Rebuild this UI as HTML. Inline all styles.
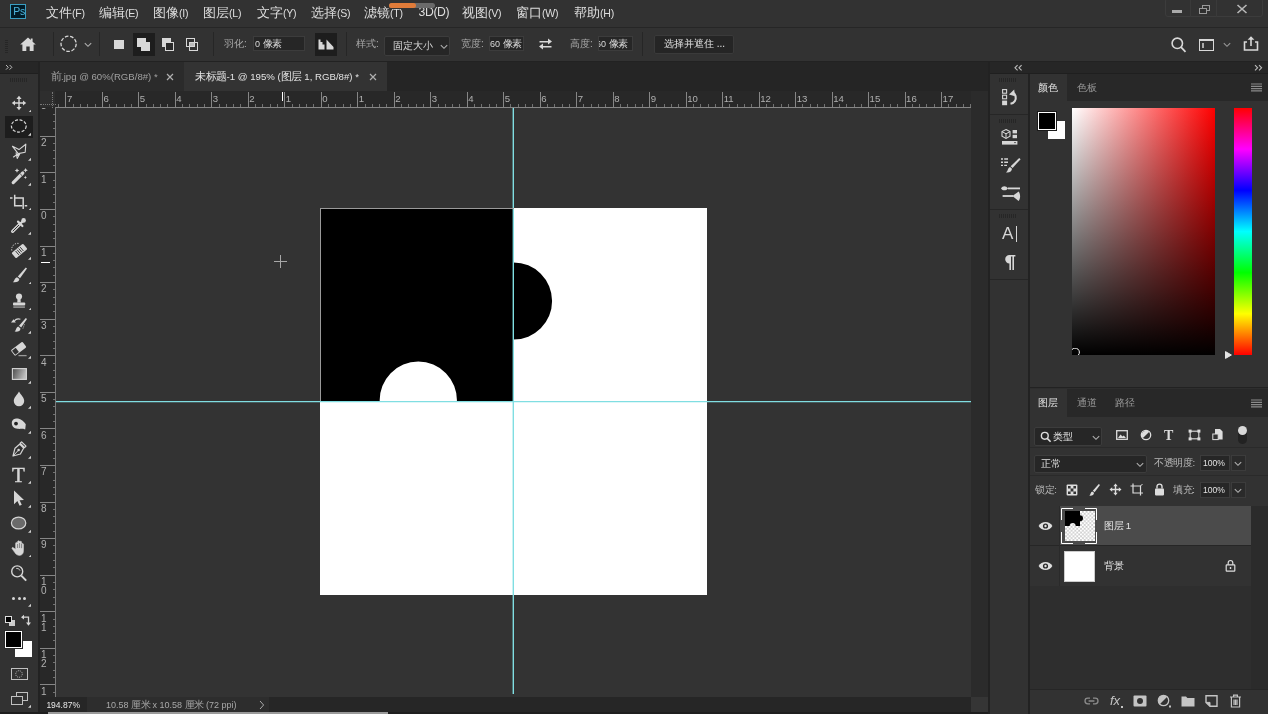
<!DOCTYPE html><html><head><meta charset="utf-8"><title>Photoshop</title><style>
*{margin:0;padding:0;box-sizing:border-box}
html{background:#323232}
html,body{width:1268px;height:714px;overflow:hidden;font-family:"Liberation Sans",sans-serif;color:#d6d6d6}
div,span,svg{position:absolute}
i{font-style:normal}
b{display:inline-block;width:1em;text-align:center;font-weight:normal}
.t{white-space:nowrap;line-height:1;filter:grayscale(1)}
#menubar{left:0;top:0;width:1268px;height:27px;background:#323232}
#optbar{left:0;top:28px;width:1268px;height:33px;background:#323232}
.m{top:6px;font-size:13px;color:#dedede}
.o{font-size:10.5px;color:#bdbdbd}
.sep{width:1px;background:#262626}
.inp{background:#262626;border:1px solid #3c3c3c}
</style></head><body>
<div id="menubar">
<div style="left:10px;top:4px;width:16px;height:15px;background:#001c28;border:1px solid #3a9ec2"></div><span class="t" style="left:13.300px;top:6px;font-size:10.500px;color:#4db4dd;letter-spacing:-0.300px;filter:brightness(1.001)">Ps</span>
<span class="t" style="left:46px;top:6.3px;font-size:13px;color:#dedede;"><b>文</b><b>件</b><i style="font-size:10.6px;letter-spacing:-0.25px">(F)</i></span>
<span class="t" style="left:99px;top:6.3px;font-size:13px;color:#dedede;"><b>编</b><b>辑</b><i style="font-size:10.6px;letter-spacing:-0.25px">(E)</i></span>
<span class="t" style="left:153px;top:6.3px;font-size:13px;color:#dedede;"><b>图</b><b>像</b><i style="font-size:10.6px;letter-spacing:-0.25px">(I)</i></span>
<span class="t" style="left:203px;top:6.3px;font-size:13px;color:#dedede;"><b>图</b><b>层</b><i style="font-size:10.6px;letter-spacing:-0.25px">(L)</i></span>
<span class="t" style="left:257px;top:6.3px;font-size:13px;color:#dedede;"><b>文</b><b>字</b><i style="font-size:10.6px;letter-spacing:-0.25px">(Y)</i></span>
<span class="t" style="left:311px;top:6.3px;font-size:13px;color:#dedede;"><b>选</b><b>择</b><i style="font-size:10.6px;letter-spacing:-0.25px">(S)</i></span>
<span class="t" style="left:364px;top:6.3px;font-size:13px;color:#dedede;"><b>滤</b><b>镜</b><i style="font-size:10.6px;letter-spacing:-0.25px">(T)</i></span>
<span class="t" style="left:418.5px;top:6px;font-size:12.2px;color:#dedede;letter-spacing:-0.350px">3D(D)</span>
<span class="t" style="left:462px;top:6.3px;font-size:13px;color:#dedede;"><b>视</b><b>图</b><i style="font-size:10.6px;letter-spacing:-0.25px">(V)</i></span>
<span class="t" style="left:516px;top:6.3px;font-size:13px;color:#dedede;"><b>窗</b><b>口</b><i style="font-size:10.6px;letter-spacing:-0.25px">(W)</i></span>
<span class="t" style="left:574px;top:6.3px;font-size:13px;color:#dedede;"><b>帮</b><b>助</b><i style="font-size:10.6px;letter-spacing:-0.25px">(H)</i></span>
</div>
<div style="left:0;top:27px;width:1268px;height:1px;background:#262626"></div>
<div id="optbar"></div>
<div style="left:5px;top:40px;width:3px;height:14px;background:repeating-linear-gradient(180deg,#262626 0 1px,#323232 1px 2px)"></div>
<svg style="left:19px;top:36px" width="18" height="16" viewBox="0 0 18 16"><path d="M9 1.5L1.2 8.6H3.4V15H7.3V10.6H10.7V15H14.6V8.6H16.8L13.6 5.7V2.6H11.8V4Z" fill="#d8d8d8"/></svg>
<div class="sep" style="left:53px;top:32px;height:24px"></div>
<svg style="left:59px;top:34px" width="20" height="20" viewBox="0 0 20 20"><circle cx="9.6" cy="9.8" r="7.6" fill="none" stroke="#d8d8d8" stroke-width="1.3" stroke-dasharray="3.6 1.7"/></svg>
<svg style="left:84px;top:42px" width="8" height="6" viewBox="0 0 8 6"><path d="M0.8 1.2L4 4.3L7.2 1.2" fill="none" stroke="#b0b0b0" stroke-width="1.1"/></svg>
<div class="sep" style="left:99px;top:32px;height:24px"></div>
<div style="left:114px;top:40px;width:10px;height:9px;background:#d8d8d8"></div>
<div style="left:133px;top:33px;width:22px;height:23px;background:#1d1d1d"></div>
<div style="left:137px;top:38px;width:9px;height:9px;background:#d8d8d8"></div><div style="left:141px;top:42px;width:9px;height:9px;background:#d8d8d8"></div>
<div style="left:162px;top:38px;width:9px;height:9px;background:#d8d8d8"></div><div style="left:165px;top:42px;width:9px;height:9px;background:#2a2a2a;border:1.3px solid #d8d8d8"></div>
<div style="left:186px;top:38px;width:9px;height:9px;border:1.3px solid #d8d8d8"></div><div style="left:189px;top:42px;width:9px;height:9px;border:1.3px solid #d8d8d8"></div><div style="left:190px;top:43px;width:4px;height:3px;background:#bbb"></div>
<div class="sep" style="left:213px;top:32px;height:24px"></div>
<span class="t" style="left:224px;top:39px;font-size:10px;color:#a8a8a8;"><b>羽</b><b>化</b>:</span>
<div class="inp" style="left:253px;top:36px;width:52px;height:15px"></div><span class="t" style="left:255px;top:39px;font-size:9.5px;color:#d8d8d8"><i style="font-size:9px">0&nbsp;</i><b>像</b><b>素</b></span>
<div style="left:315px;top:33px;width:22px;height:23px;background:#1d1d1d"></div>
<svg style="left:317px;top:38px" width="18" height="13" viewBox="0 0 18 13"><path d="M1.5 1.5H3.5V4H5.5V6.5H7.5V11.5H1.5Z M9.5 1.5L16.5 9V11.5H9.5Z" fill="#d8d8d8"/></svg>
<div class="sep" style="left:346px;top:32px;height:24px"></div>
<span class="t" style="left:356px;top:39px;font-size:10px;color:#a8a8a8;"><b>样</b><b>式</b>:</span>
<div class="inp" style="left:384px;top:36px;width:66px;height:20px;border-radius:2px"></div><span class="t" style="left:393px;top:41px;font-size:10px;color:#d8d8d8"><b>固</b><b>定</b><b>大</b><b>小</b></span>
<svg style="left:440px;top:44px" width="8" height="6" viewBox="0 0 8 6"><path d="M0.8 1.2L4 4.3L7.2 1.2" fill="none" stroke="#b0b0b0" stroke-width="1.1"/></svg>
<span class="t" style="left:461px;top:39px;font-size:10px;color:#a8a8a8;"><b>宽</b><b>度</b>:</span>
<div class="inp" style="left:489px;top:36px;width:35px;height:15px"></div><span class="t" style="left:490px;top:39px;font-size:9.5px;color:#d8d8d8"><i style="font-size:9px">60&nbsp;</i><b>像</b><b>素</b></span>
<svg style="left:538px;top:37px" width="15" height="14" viewBox="0 0 15 14"><path d="M1.5 4.6H10V2L14 5.2L10 8.2V6H1.5Z M13.5 9.6H5V7.2L1 10.2L5 13.2V11H13.5Z" fill="#d8d8d8" transform="translate(0,-0.6)"/></svg>
<span class="t" style="left:570px;top:39px;font-size:10px;color:#a8a8a8;"><b>高</b><b>度</b>:</span>
<div class="inp" style="left:598px;top:36px;width:35px;height:15px;overflow:hidden"><span class="t" style="left:-3px;top:2px;font-size:9.5px;color:#d8d8d8"><i style="font-size:9px">60&nbsp;</i><b>像</b><b>素</b></span></div>
<div class="sep" style="left:642px;top:32px;height:24px"></div>
<div style="left:654px;top:35px;width:80px;height:19px;background:#252525;border:1px solid #3a3a3a;border-radius:2px"></div><span class="t" style="left:664px;top:39px;font-size:10px;color:#e0e0e0"><b>选</b><b>择</b><b>并</b><b>遮</b><b>住</b> ...</span>
<svg style="left:1170px;top:36px" width="18" height="18" viewBox="0 0 18 18"><circle cx="7.3" cy="7.3" r="5.2" fill="none" stroke="#d8d8d8" stroke-width="1.6"/><path d="M11 11.2L15.5 15.8" stroke="#d8d8d8" stroke-width="1.8"/></svg>
<div style="left:1198.500px;top:39px;width:15.500px;height:12px;border:1.300px solid #d8d8d8;border-top-width:2px"></div><div style="left:1201.500px;top:43px;width:2px;height:5px;background:#aaa"></div>
<svg style="left:1223px;top:42px" width="8" height="6" viewBox="0 0 8 6"><path d="M0.8 1.2L4 4.3L7.2 1.2" fill="none" stroke="#999" stroke-width="1.1"/></svg>
<svg style="left:1242px;top:34px" width="18" height="18" viewBox="0 0 18 18"><path d="M5 8H2.5V16H15.5V8H13" fill="none" stroke="#d8d8d8" stroke-width="1.6"/><path d="M9 12V3.5" stroke="#d8d8d8" stroke-width="1.6"/><path d="M5.6 5.8L9 2.2L12.4 5.8Z" fill="#d8d8d8"/></svg>
<div style="left:1165px;top:-2px;width:98px;height:19px;border:1px solid #3c3c3c;border-radius:3px"></div>
<div style="left:1190px;top:0;width:1px;height:17px;background:#3a3a3a"></div><div style="left:1216px;top:0;width:1px;height:17px;background:#3a3a3a"></div>
<div style="left:1172px;top:10px;width:10px;height:3px;background:#aaa"></div>
<div style="left:1202px;top:5px;width:8px;height:6px;border:1.3px solid #999"></div><div style="left:1199px;top:8px;width:8px;height:6px;border:1.3px solid #999;background:#2f2f2f"></div>
<svg style="left:1236px;top:4px" width="12" height="10" viewBox="0 0 12 10"><path d="M1.5 1L10.5 9M10.5 1L1.5 9" stroke="#b8b8b8" stroke-width="1.6"/></svg>
<div style="left:389px;top:3px;width:46px;height:5px;background:#6a6a6a;border-radius:3px"></div><div style="left:389px;top:3px;width:27px;height:5px;background:#e07b39;border-radius:3px"></div>
<div style="left:0;top:61px;width:1268px;height:1px;background:#222"></div>
<div style="left:40px;top:62px;width:948px;height:29px;background:#252525"></div><div style="left:40px;top:62px;width:144px;height:29px;background:#2b2b2b"></div>
<div style="left:184px;top:62px;width:203px;height:29px;background:#333"></div>
<span class="t" style="left:50.5px;top:71px;font-size:10.5px;color:#a0a0a0;"><b>前</b><i style="font-size:9.6px">.jpg&nbsp;@&nbsp;60%(RGB/8#)&nbsp;*</i></span>
<svg style="left:165.5px;top:72.5px" width="8" height="8" viewBox="0 0 8 8"><path d="M1 1L7 7M7 1L1 7" stroke="#b0b0b0" stroke-width="1.2"/></svg>
<span class="t" style="left:195px;top:71px;font-size:10.5px;color:#e4e4e4;"><b>未</b><b>标</b><b>题</b><i style="font-size:9.65px">-1&nbsp;@&nbsp;195%&nbsp;(</i><b>图</b><b>层</b><i style="font-size:9.65px">&nbsp;1,&nbsp;RGB/8#)&nbsp;*</i></span>
<svg style="left:368.5px;top:72.5px" width="8" height="8" viewBox="0 0 8 8"><path d="M1 1L7 7M7 1L1 7" stroke="#b0b0b0" stroke-width="1.2"/></svg>
<div style="left:0;top:62px;width:38px;height:652px;background:#323232"></div>
<div style="left:0;top:62px;width:38px;height:11px;background:#262626"></div>
<div style="left:38px;top:62px;width:2px;height:652px;background:#222"></div>
<svg style="left:5px;top:64px" width="9" height="7" viewBox="0 0 9 7"><path d="M1 1L3.300 3.300L1 5.600M4.600 1L6.900 3.300L4.600 5.600" fill="none" stroke="#bbb" stroke-width="1"/></svg>
<div style="left:10px;top:78px;width:18px;height:4px;background:repeating-linear-gradient(90deg,#262626 0 1px,#323232 1px 2px)"></div>
<div style="left:0;top:73px;width:38px;height:1px;background:#1f1f1f"></div>
<div style="left:5px;top:116px;width:28px;height:22px;background:#1d1d1d"></div>
<svg style="left:7px;top:90.7px" width="24" height="24" viewBox="0 0 24 24"><path d="M12 4.8l2.6 3.2h-1.9v3.3h3.3V9.4l3.2 2.6-3.2 2.6v-1.9h-3.3v3.3h1.9L12 19.2l-2.6-3.2h1.9v-3.3H8v1.9L4.8 12 8 9.4v1.9h3.3V8H9.4z" fill="#d6d6d6"/></svg>
<svg style="left:27.500px;top:108.7px" width="3.800" height="3.800" viewBox="0 0 4 4"><path d="M4 0V4H0Z" fill="#cfcfcf"/></svg>
<svg style="left:7px;top:114.3px" width="24" height="24" viewBox="0 0 24 24"><ellipse cx="11.8" cy="12" rx="7.4" ry="6.1" fill="none" stroke="#d6d6d6" stroke-width="1.2" stroke-dasharray="3 1.6"/></svg>
<svg style="left:27.500px;top:132.3px" width="3.800" height="3.800" viewBox="0 0 4 4"><path d="M4 0V4H0Z" fill="#cfcfcf"/></svg>
<svg style="left:7px;top:139.2px" width="24" height="24" viewBox="0 0 24 24"><path d="M5.5 7.3L12 10.6L18.8 5.2L18.2 13.2L11.2 14.6ZM11.2 14.6L6.2 18.2M9 13.4L10.2 19.4L12.6 15.2L8.6 16.4" fill="none" stroke="#d6d6d6" stroke-width="1.1" stroke-linejoin="round"/></svg>
<svg style="left:27.500px;top:157.2px" width="3.800" height="3.800" viewBox="0 0 4 4"><path d="M4 0V4H0Z" fill="#cfcfcf"/></svg>
<svg style="left:7px;top:164.0px" width="24" height="24" viewBox="0 0 24 24"><path d="M6.2 18.6L15.8 9" stroke="#d6d6d6" stroke-width="3.2" stroke-linecap="round"/><path d="M13.2 9.8L15 11.6" stroke="#323232" stroke-width="0.9"/><path d="M10 4.2l.7 1.6 1.6.7-1.6.7-.7 1.6-.7-1.6-1.6-.7 1.6-.7zM18.6 4l.7 1.6 1.6.7-1.6.7-.7 1.6-.7-1.6L16.300 6.300l1.600-.7zM18.400 11.800l.5 1.100 1.100.5-1.100.5-.5 1.100-.5-1.100-1.100-.5 1.100-.5z" fill="#d6d6d6"/></svg>
<svg style="left:27.500px;top:182.0px" width="3.800" height="3.800" viewBox="0 0 4 4"><path d="M4 0V4H0Z" fill="#cfcfcf"/></svg>
<svg style="left:7px;top:188.7px" width="24" height="24" viewBox="0 0 24 24"><path d="M7.700 5.700V16.800H15.200M3 9H5.500M7.700 9H16.200V20M17.700 16.800H20.200" fill="none" stroke="#d6d6d6" stroke-width="1.5"/></svg>
<svg style="left:27.500px;top:206.7px" width="3.800" height="3.800" viewBox="0 0 4 4"><path d="M4 0V4H0Z" fill="#cfcfcf"/></svg>
<svg style="left:7px;top:213.3px" width="24" height="24" viewBox="0 0 24 24"><path d="M5.600 18.400L12.600 11.400" stroke="#d6d6d6" stroke-width="3.200" stroke-linecap="round"/><path d="M6 18L12 12" stroke="#323232" stroke-width="1" stroke-linecap="round"/><path d="M11 8.600L15.400 13M12.800 11.200L16.200 7.800" stroke="#d6d6d6" stroke-width="2.200" stroke-linecap="round"/><circle cx="16.600" cy="7.400" r="2.300" fill="#d6d6d6"/></svg>
<svg style="left:27.500px;top:231.3px" width="3.800" height="3.800" viewBox="0 0 4 4"><path d="M4 0V4H0Z" fill="#cfcfcf"/></svg>
<svg style="left:7px;top:238.0px" width="24" height="24" viewBox="0 0 24 24"><g transform="rotate(-40 12.500 13)"><rect x="5" y="9.500" width="15" height="7" rx="1.200" fill="#d6d6d6"/><path d="M9.500 10.500V15.500M11.500 10.500V15.500M13.500 10.500V15.500M15.500 10.500V15.500" stroke="#323232" stroke-width="0.900"/></g><path d="M4.800 12.500A6 6 0 0 1 11.500 5.400" fill="none" stroke="#d6d6d6" stroke-width="1" stroke-dasharray="1.300 1.200"/></svg>
<svg style="left:27.500px;top:256.0px" width="3.800" height="3.800" viewBox="0 0 4 4"><path d="M4 0V4H0Z" fill="#cfcfcf"/></svg>
<svg style="left:7px;top:262.6px" width="24" height="24" viewBox="0 0 24 24"><path d="M18.800 4.600L20 5.600L13 15.200L10.800 13.400Z" fill="#d6d6d6"/><path d="M10 14.200L12.300 16.100C12.300 18.600 9.500 19.800 5.800 19.200C7.800 18 7.400 15 10 14.200Z" fill="#d6d6d6"/></svg>
<svg style="left:27.500px;top:280.6px" width="3.800" height="3.800" viewBox="0 0 4 4"><path d="M4 0V4H0Z" fill="#cfcfcf"/></svg>
<svg style="left:7px;top:288.6px" width="24" height="24" viewBox="0 0 24 24"><circle cx="12" cy="7.600" r="3.100" fill="#d6d6d6"/><path d="M10.600 9.500H13.400L13.800 13.600H10.200Z" fill="#d6d6d6"/><rect x="6" y="13.400" width="12.200" height="3.100" rx="0.800" fill="#d6d6d6"/><rect x="6.300" y="17.200" width="11.600" height="1.800" fill="#888"/></svg>
<svg style="left:27.500px;top:306.6px" width="3.800" height="3.800" viewBox="0 0 4 4"><path d="M4 0V4H0Z" fill="#cfcfcf"/></svg>
<svg style="left:7px;top:312.3px" width="24" height="24" viewBox="0 0 24 24"><path d="M18.800 6L20 7L14.200 15.600L12 13.800Z" fill="#d6d6d6"/><path d="M11.200 14.600L13.500 16.500C13.500 19 11 20 7.600 19.600C9.400 18.400 9 15.400 11.200 14.600Z" fill="#d6d6d6"/><path d="M4 10.400L8.800 10.600L6.600 7.200Z" fill="#d6d6d6"/><path d="M7.400 8.800A5 4.200 0 0 1 13.400 7.200" fill="none" stroke="#d6d6d6" stroke-width="1.200"/><path d="M17.400 12.400L15.800 17" stroke="#d6d6d6" stroke-width="0.900" stroke-dasharray="1 1.200"/></svg>
<svg style="left:27.500px;top:330.3px" width="3.800" height="3.800" viewBox="0 0 4 4"><path d="M4 0V4H0Z" fill="#cfcfcf"/></svg>
<svg style="left:7px;top:337.0px" width="24" height="24" viewBox="0 0 24 24"><g transform="rotate(-38 11.500 12)"><rect x="4.500" y="8.400" width="14.500" height="7" rx="1" fill="#d6d6d6"/><rect x="5.400" y="9.300" width="4.600" height="5.200" fill="#323232"/></g><path d="M11.500 18.600H19.600" stroke="#999" stroke-width="1.300"/></svg>
<svg style="left:27.500px;top:355.0px" width="3.800" height="3.800" viewBox="0 0 4 4"><path d="M4 0V4H0Z" fill="#cfcfcf"/></svg>
<svg style="left:7px;top:362.0px" width="24" height="24" viewBox="0 0 24 24"><defs><linearGradient id="gr" x1="0" x2="1" y1="0" y2="0.300"><stop offset="0" stop-color="#4a4a4a"/><stop offset="1" stop-color="#bdbdbd"/></linearGradient></defs><rect x="5.400" y="6.600" width="14" height="10.800" fill="url(#gr)" stroke="#d6d6d6" stroke-width="1.100"/></svg>
<svg style="left:27.500px;top:380.0px" width="3.800" height="3.800" viewBox="0 0 4 4"><path d="M4 0V4H0Z" fill="#cfcfcf"/></svg>
<svg style="left:7px;top:387.0px" width="24" height="24" viewBox="0 0 24 24"><path d="M12 4.600C13.800 8 17.200 10.600 17.200 14A5.200 5.200 0 0 1 6.800 14C6.800 10.600 10.200 8 12 4.600Z" fill="#d6d6d6"/></svg>
<svg style="left:27.500px;top:405.0px" width="3.800" height="3.800" viewBox="0 0 4 4"><path d="M4 0V4H0Z" fill="#cfcfcf"/></svg>
<svg style="left:7px;top:411.8px" width="24" height="24" viewBox="0 0 24 24"><path d="M4.800 11C4.800 7.600 8 6.200 11 6.600C14 7 17 9.600 18.800 12.200L18.200 17.400C15 16.400 13 17.200 10.400 16.800C7 16.400 4.800 14.400 4.800 11Z" fill="#d6d6d6"/><circle cx="9" cy="11.600" r="1.900" fill="#222"/></svg>
<svg style="left:27.500px;top:429.8px" width="3.800" height="3.800" viewBox="0 0 4 4"><path d="M4 0V4H0Z" fill="#cfcfcf"/></svg>
<svg style="left:7px;top:437.0px" width="24" height="24" viewBox="0 0 24 24"><path d="M14.600 4.800L19 9.200L17.600 10.600L13.200 6.200ZM12.600 7.200L16.600 11.200L13.400 17L6 19L8 11.200Z" fill="none" stroke="#d6d6d6" stroke-width="1.200" stroke-linejoin="round"/><path d="M6.400 18.600L11.200 13.400" stroke="#d6d6d6" stroke-width="1"/><circle cx="11.600" cy="13" r="1.300" fill="#d6d6d6"/></svg>
<svg style="left:27.500px;top:455.0px" width="3.800" height="3.800" viewBox="0 0 4 4"><path d="M4 0V4H0Z" fill="#cfcfcf"/></svg>
<svg style="left:7px;top:486.3px" width="24" height="24" viewBox="0 0 24 24"><path d="M7 4.600V18.200L10.400 15L12.600 19.800L14.800 18.800L12.600 14.200L17 14Z" fill="#d6d6d6"/></svg>
<svg style="left:27.500px;top:504.3px" width="3.800" height="3.800" viewBox="0 0 4 4"><path d="M4 0V4H0Z" fill="#cfcfcf"/></svg>
<svg style="left:7px;top:511.0px" width="24" height="24" viewBox="0 0 24 24"><ellipse cx="11.600" cy="12" rx="7.200" ry="5.900" fill="#6a6a6a" stroke="#d6d6d6" stroke-width="1.200"/></svg>
<svg style="left:27.500px;top:529.0px" width="3.800" height="3.800" viewBox="0 0 4 4"><path d="M4 0V4H0Z" fill="#cfcfcf"/></svg>
<svg style="left:7px;top:535.6px" width="24" height="24" viewBox="0 0 24 24"><path d="M8.600 13.200V7.400a1 1 0 0 1 2 0V11.500V5.800a1 1 0 0 1 2 0V11.400V6.300a1 1 0 0 1 2 0V11.800V8.200a1 1 0 0 1 1.900 0V14.600C16.500 17.800 15 19.400 12.400 19.400C10.200 19.400 9 18.400 7.800 16.600L5 12.600C4.600 11.800 5.600 11 6.400 11.800Z" fill="#d6d6d6" stroke="#d6d6d6" stroke-width="0.500"/><path d="M10.600 8V12M12.600 7V12M14.600 8V12.200" stroke="#323232" stroke-width="0.500"/></svg>
<svg style="left:27.500px;top:553.6px" width="3.800" height="3.800" viewBox="0 0 4 4"><path d="M4 0V4H0Z" fill="#cfcfcf"/></svg>
<svg style="left:7px;top:560.6px" width="24" height="24" viewBox="0 0 24 24"><circle cx="10.200" cy="10.400" r="5.500" fill="none" stroke="#d6d6d6" stroke-width="1.400"/><path d="M14.300 14.600L19.200 19.600" stroke="#d6d6d6" stroke-width="2"/><path d="M9.200 7.400A3.400 3.400 0 0 1 13 9.600" fill="none" stroke="#d6d6d6" stroke-width="0.900"/></svg>
<span class="t" style="left:12px;top:464.500px;font-family:'Liberation Serif',serif;font-size:21px;color:#d6d6d6;-webkit-text-stroke:0.400px #d6d6d6">T</span>
<svg style="left:27.500px;top:480px" width="3.800" height="3.800" viewBox="0 0 4 4"><path d="M4 0V4H0Z" fill="#cfcfcf"/></svg>
<div style="left:12px;top:597px;width:3px;height:3px;border-radius:2px;background:#d6d6d6"></div><div style="left:17.500px;top:597px;width:3px;height:3px;border-radius:2px;background:#d6d6d6"></div><div style="left:23px;top:597px;width:3px;height:3px;border-radius:2px;background:#d6d6d6"></div>
<svg style="left:27.500px;top:603.400px" width="3.800" height="3.800" viewBox="0 0 4 4"><path d="M4 0V4H0Z" fill="#cfcfcf"/></svg>
<div style="left:9px;top:620px;width:6px;height:6px;background:#ccc"></div><div style="left:5px;top:616px;width:7px;height:7px;background:#000;border:1px solid #ddd"></div>
<svg style="left:20px;top:614px" width="13" height="13" viewBox="0 0 13 13"><path d="M3.500 3.200H8.500V9" fill="none" stroke="#d6d6d6" stroke-width="1.300"/><path d="M1 3.200L4 0.800V5.600ZM8.500 11.800L6 8.600H11Z" fill="#d6d6d6"/></svg>
<div style="left:15px;top:641px;width:17px;height:16px;background:#fff"></div>
<div style="left:4px;top:630px;width:19px;height:19px;background:#000;border:1px solid #2a2a2a"></div><div style="left:5px;top:631px;width:17px;height:17px;background:#000;border:1px solid #fff"></div>
<div style="left:11px;top:668px;width:17px;height:12px;border:1.500px solid #c0c0c0"></div><svg style="left:14px;top:669px" width="10" height="10" viewBox="0 0 10 10"><circle cx="5" cy="5" r="3.300" fill="none" stroke="#c8c8c8" stroke-width="0.900" stroke-dasharray="1 1"/></svg>
<div style="left:16px;top:692px;width:12px;height:9px;border:1.500px solid #c0c0c0"></div><div style="left:11px;top:696px;width:12px;height:9px;border:1.500px solid #c0c0c0;background:#323232"></div>
<svg style="left:27.500px;top:704.200px" width="3.800" height="3.800" viewBox="0 0 4 4"><path d="M4 0V4H0Z" fill="#cfcfcf"/></svg>
<div style="left:40px;top:91px;width:931px;height:17px;background:#282828"></div>
<div style="left:40px;top:91px;width:15px;height:606px;background:#282828"></div>
<div style="left:40px;top:91px;width:15px;height:16px;background:#2e2e2e"></div>
<div style="left:55px;top:107px;width:916px;height:1px;background:#868686"></div>
<div style="left:55px;top:107px;width:1px;height:590px;background:#7a7a7a"></div>
<div style="left:65.3px;top:92px;width:1px;height:15px;background:#868686"></div><span class="t" style="left:66.9px;top:94.300px;font-size:9.600px;color:#b0b0b0">7</span><div style="left:72.6px;top:104px;width:1px;height:3px;background:#727272"></div><div style="left:79.9px;top:104px;width:1px;height:3px;background:#727272"></div><div style="left:87.2px;top:104px;width:1px;height:3px;background:#727272"></div><div style="left:94.5px;top:104px;width:1px;height:3px;background:#727272"></div><div style="left:101.8px;top:92px;width:1px;height:15px;background:#868686"></div><span class="t" style="left:103.4px;top:94.300px;font-size:9.600px;color:#b0b0b0">6</span><div style="left:109.1px;top:104px;width:1px;height:3px;background:#727272"></div><div style="left:116.4px;top:104px;width:1px;height:3px;background:#727272"></div><div style="left:123.7px;top:104px;width:1px;height:3px;background:#727272"></div><div style="left:131.0px;top:104px;width:1px;height:3px;background:#727272"></div><div style="left:138.2px;top:92px;width:1px;height:15px;background:#868686"></div><span class="t" style="left:139.8px;top:94.300px;font-size:9.600px;color:#b0b0b0">5</span><div style="left:145.5px;top:104px;width:1px;height:3px;background:#727272"></div><div style="left:152.8px;top:104px;width:1px;height:3px;background:#727272"></div><div style="left:160.1px;top:104px;width:1px;height:3px;background:#727272"></div><div style="left:167.4px;top:104px;width:1px;height:3px;background:#727272"></div><div style="left:174.7px;top:92px;width:1px;height:15px;background:#868686"></div><span class="t" style="left:176.3px;top:94.300px;font-size:9.600px;color:#b0b0b0">4</span><div style="left:182.0px;top:104px;width:1px;height:3px;background:#727272"></div><div style="left:189.3px;top:104px;width:1px;height:3px;background:#727272"></div><div style="left:196.6px;top:104px;width:1px;height:3px;background:#727272"></div><div style="left:203.9px;top:104px;width:1px;height:3px;background:#727272"></div><div style="left:211.2px;top:92px;width:1px;height:15px;background:#868686"></div><span class="t" style="left:212.8px;top:94.300px;font-size:9.600px;color:#b0b0b0">3</span><div style="left:218.5px;top:104px;width:1px;height:3px;background:#727272"></div><div style="left:225.8px;top:104px;width:1px;height:3px;background:#727272"></div><div style="left:233.1px;top:104px;width:1px;height:3px;background:#727272"></div><div style="left:240.4px;top:104px;width:1px;height:3px;background:#727272"></div><div style="left:247.7px;top:92px;width:1px;height:15px;background:#868686"></div><span class="t" style="left:249.3px;top:94.300px;font-size:9.600px;color:#b0b0b0">2</span><div style="left:255.0px;top:104px;width:1px;height:3px;background:#727272"></div><div style="left:262.3px;top:104px;width:1px;height:3px;background:#727272"></div><div style="left:269.6px;top:104px;width:1px;height:3px;background:#727272"></div><div style="left:276.9px;top:104px;width:1px;height:3px;background:#727272"></div><div style="left:284.2px;top:92px;width:1px;height:15px;background:#868686"></div><span class="t" style="left:285.8px;top:94.300px;font-size:9.600px;color:#b0b0b0">1</span><div style="left:291.5px;top:104px;width:1px;height:3px;background:#727272"></div><div style="left:298.8px;top:104px;width:1px;height:3px;background:#727272"></div><div style="left:306.1px;top:104px;width:1px;height:3px;background:#727272"></div><div style="left:313.4px;top:104px;width:1px;height:3px;background:#727272"></div><div style="left:320.7px;top:92px;width:1px;height:15px;background:#868686"></div><span class="t" style="left:322.3px;top:94.300px;font-size:9.600px;color:#b0b0b0">0</span><div style="left:328.0px;top:104px;width:1px;height:3px;background:#727272"></div><div style="left:335.3px;top:104px;width:1px;height:3px;background:#727272"></div><div style="left:342.6px;top:104px;width:1px;height:3px;background:#727272"></div><div style="left:349.9px;top:104px;width:1px;height:3px;background:#727272"></div><div style="left:357.2px;top:92px;width:1px;height:15px;background:#868686"></div><span class="t" style="left:358.8px;top:94.300px;font-size:9.600px;color:#b0b0b0">1</span><div style="left:364.5px;top:104px;width:1px;height:3px;background:#727272"></div><div style="left:371.8px;top:104px;width:1px;height:3px;background:#727272"></div><div style="left:379.1px;top:104px;width:1px;height:3px;background:#727272"></div><div style="left:386.4px;top:104px;width:1px;height:3px;background:#727272"></div><div style="left:393.7px;top:92px;width:1px;height:15px;background:#868686"></div><span class="t" style="left:395.3px;top:94.300px;font-size:9.600px;color:#b0b0b0">2</span><div style="left:401.0px;top:104px;width:1px;height:3px;background:#727272"></div><div style="left:408.3px;top:104px;width:1px;height:3px;background:#727272"></div><div style="left:415.6px;top:104px;width:1px;height:3px;background:#727272"></div><div style="left:422.9px;top:104px;width:1px;height:3px;background:#727272"></div><div style="left:430.2px;top:92px;width:1px;height:15px;background:#868686"></div><span class="t" style="left:431.8px;top:94.300px;font-size:9.600px;color:#b0b0b0">3</span><div style="left:437.5px;top:104px;width:1px;height:3px;background:#727272"></div><div style="left:444.8px;top:104px;width:1px;height:3px;background:#727272"></div><div style="left:452.1px;top:104px;width:1px;height:3px;background:#727272"></div><div style="left:459.4px;top:104px;width:1px;height:3px;background:#727272"></div><div style="left:466.7px;top:92px;width:1px;height:15px;background:#868686"></div><span class="t" style="left:468.3px;top:94.300px;font-size:9.600px;color:#b0b0b0">4</span><div style="left:474.0px;top:104px;width:1px;height:3px;background:#727272"></div><div style="left:481.3px;top:104px;width:1px;height:3px;background:#727272"></div><div style="left:488.6px;top:104px;width:1px;height:3px;background:#727272"></div><div style="left:495.9px;top:104px;width:1px;height:3px;background:#727272"></div><div style="left:503.1px;top:92px;width:1px;height:15px;background:#868686"></div><span class="t" style="left:504.8px;top:94.300px;font-size:9.600px;color:#b0b0b0">5</span><div style="left:510.4px;top:104px;width:1px;height:3px;background:#727272"></div><div style="left:517.7px;top:104px;width:1px;height:3px;background:#727272"></div><div style="left:525.0px;top:104px;width:1px;height:3px;background:#727272"></div><div style="left:532.3px;top:104px;width:1px;height:3px;background:#727272"></div><div style="left:539.6px;top:92px;width:1px;height:15px;background:#868686"></div><span class="t" style="left:541.2px;top:94.300px;font-size:9.600px;color:#b0b0b0">6</span><div style="left:546.9px;top:104px;width:1px;height:3px;background:#727272"></div><div style="left:554.2px;top:104px;width:1px;height:3px;background:#727272"></div><div style="left:561.5px;top:104px;width:1px;height:3px;background:#727272"></div><div style="left:568.8px;top:104px;width:1px;height:3px;background:#727272"></div><div style="left:576.1px;top:92px;width:1px;height:15px;background:#868686"></div><span class="t" style="left:577.7px;top:94.300px;font-size:9.600px;color:#b0b0b0">7</span><div style="left:583.4px;top:104px;width:1px;height:3px;background:#727272"></div><div style="left:590.7px;top:104px;width:1px;height:3px;background:#727272"></div><div style="left:598.0px;top:104px;width:1px;height:3px;background:#727272"></div><div style="left:605.3px;top:104px;width:1px;height:3px;background:#727272"></div><div style="left:612.6px;top:92px;width:1px;height:15px;background:#868686"></div><span class="t" style="left:614.2px;top:94.300px;font-size:9.600px;color:#b0b0b0">8</span><div style="left:619.9px;top:104px;width:1px;height:3px;background:#727272"></div><div style="left:627.2px;top:104px;width:1px;height:3px;background:#727272"></div><div style="left:634.5px;top:104px;width:1px;height:3px;background:#727272"></div><div style="left:641.8px;top:104px;width:1px;height:3px;background:#727272"></div><div style="left:649.1px;top:92px;width:1px;height:15px;background:#868686"></div><span class="t" style="left:650.7px;top:94.300px;font-size:9.600px;color:#b0b0b0">9</span><div style="left:656.4px;top:104px;width:1px;height:3px;background:#727272"></div><div style="left:663.7px;top:104px;width:1px;height:3px;background:#727272"></div><div style="left:671.0px;top:104px;width:1px;height:3px;background:#727272"></div><div style="left:678.3px;top:104px;width:1px;height:3px;background:#727272"></div><div style="left:685.6px;top:92px;width:1px;height:15px;background:#868686"></div><span class="t" style="left:687.2px;top:94.300px;font-size:9.600px;color:#b0b0b0">10</span><div style="left:692.9px;top:104px;width:1px;height:3px;background:#727272"></div><div style="left:700.2px;top:104px;width:1px;height:3px;background:#727272"></div><div style="left:707.5px;top:104px;width:1px;height:3px;background:#727272"></div><div style="left:714.8px;top:104px;width:1px;height:3px;background:#727272"></div><div style="left:722.1px;top:92px;width:1px;height:15px;background:#868686"></div><span class="t" style="left:723.7px;top:94.300px;font-size:9.600px;color:#b0b0b0">11</span><div style="left:729.4px;top:104px;width:1px;height:3px;background:#727272"></div><div style="left:736.7px;top:104px;width:1px;height:3px;background:#727272"></div><div style="left:744.0px;top:104px;width:1px;height:3px;background:#727272"></div><div style="left:751.3px;top:104px;width:1px;height:3px;background:#727272"></div><div style="left:758.6px;top:92px;width:1px;height:15px;background:#868686"></div><span class="t" style="left:760.2px;top:94.300px;font-size:9.600px;color:#b0b0b0">12</span><div style="left:765.9px;top:104px;width:1px;height:3px;background:#727272"></div><div style="left:773.2px;top:104px;width:1px;height:3px;background:#727272"></div><div style="left:780.5px;top:104px;width:1px;height:3px;background:#727272"></div><div style="left:787.8px;top:104px;width:1px;height:3px;background:#727272"></div><div style="left:795.1px;top:92px;width:1px;height:15px;background:#868686"></div><span class="t" style="left:796.7px;top:94.300px;font-size:9.600px;color:#b0b0b0">13</span><div style="left:802.4px;top:104px;width:1px;height:3px;background:#727272"></div><div style="left:809.7px;top:104px;width:1px;height:3px;background:#727272"></div><div style="left:817.0px;top:104px;width:1px;height:3px;background:#727272"></div><div style="left:824.3px;top:104px;width:1px;height:3px;background:#727272"></div><div style="left:831.6px;top:92px;width:1px;height:15px;background:#868686"></div><span class="t" style="left:833.2px;top:94.300px;font-size:9.600px;color:#b0b0b0">14</span><div style="left:838.9px;top:104px;width:1px;height:3px;background:#727272"></div><div style="left:846.2px;top:104px;width:1px;height:3px;background:#727272"></div><div style="left:853.5px;top:104px;width:1px;height:3px;background:#727272"></div><div style="left:860.8px;top:104px;width:1px;height:3px;background:#727272"></div><div style="left:868.0px;top:92px;width:1px;height:15px;background:#868686"></div><span class="t" style="left:869.6px;top:94.300px;font-size:9.600px;color:#b0b0b0">15</span><div style="left:875.3px;top:104px;width:1px;height:3px;background:#727272"></div><div style="left:882.6px;top:104px;width:1px;height:3px;background:#727272"></div><div style="left:889.9px;top:104px;width:1px;height:3px;background:#727272"></div><div style="left:897.2px;top:104px;width:1px;height:3px;background:#727272"></div><div style="left:904.5px;top:92px;width:1px;height:15px;background:#868686"></div><span class="t" style="left:906.1px;top:94.300px;font-size:9.600px;color:#b0b0b0">16</span><div style="left:911.8px;top:104px;width:1px;height:3px;background:#727272"></div><div style="left:919.1px;top:104px;width:1px;height:3px;background:#727272"></div><div style="left:926.4px;top:104px;width:1px;height:3px;background:#727272"></div><div style="left:933.7px;top:104px;width:1px;height:3px;background:#727272"></div><div style="left:941.0px;top:92px;width:1px;height:15px;background:#868686"></div><span class="t" style="left:942.6px;top:94.300px;font-size:9.600px;color:#b0b0b0">17</span><div style="left:948.3px;top:104px;width:1px;height:3px;background:#727272"></div><div style="left:955.6px;top:104px;width:1px;height:3px;background:#727272"></div><div style="left:962.9px;top:104px;width:1px;height:3px;background:#727272"></div><div style="left:970.2px;top:104px;width:1px;height:3px;background:#727272"></div><div style="left:58.0px;top:104px;width:1px;height:3px;background:#727272"></div>
<div style="left:52.500px;top:113.8px;width:2.500px;height:1px;background:#727272"></div><div style="left:52.500px;top:121.1px;width:2.500px;height:1px;background:#727272"></div><div style="left:52.500px;top:128.4px;width:2.500px;height:1px;background:#727272"></div><div style="left:40px;top:135.8px;width:15px;height:1px;background:#868686"></div><span class="t" style="left:41px;top:138.2px;font-size:10px;color:#b0b0b0">2</span><div style="left:52.500px;top:143.1px;width:2.500px;height:1px;background:#727272"></div><div style="left:52.500px;top:150.4px;width:2.500px;height:1px;background:#727272"></div><div style="left:52.500px;top:157.7px;width:2.500px;height:1px;background:#727272"></div><div style="left:52.500px;top:165.0px;width:2.500px;height:1px;background:#727272"></div><div style="left:40px;top:172.3px;width:15px;height:1px;background:#868686"></div><span class="t" style="left:41px;top:174.7px;font-size:10px;color:#b0b0b0">1</span><div style="left:52.500px;top:179.6px;width:2.500px;height:1px;background:#727272"></div><div style="left:52.500px;top:187.0px;width:2.500px;height:1px;background:#727272"></div><div style="left:52.500px;top:194.3px;width:2.500px;height:1px;background:#727272"></div><div style="left:52.500px;top:201.6px;width:2.500px;height:1px;background:#727272"></div><div style="left:40px;top:208.9px;width:15px;height:1px;background:#868686"></div><span class="t" style="left:41px;top:211.3px;font-size:10px;color:#b0b0b0">0</span><div style="left:52.500px;top:216.2px;width:2.500px;height:1px;background:#727272"></div><div style="left:52.500px;top:223.5px;width:2.500px;height:1px;background:#727272"></div><div style="left:52.500px;top:230.8px;width:2.500px;height:1px;background:#727272"></div><div style="left:52.500px;top:238.2px;width:2.500px;height:1px;background:#727272"></div><div style="left:40px;top:245.5px;width:15px;height:1px;background:#868686"></div><span class="t" style="left:41px;top:247.9px;font-size:10px;color:#b0b0b0">1</span><div style="left:52.500px;top:252.8px;width:2.500px;height:1px;background:#727272"></div><div style="left:52.500px;top:260.1px;width:2.500px;height:1px;background:#727272"></div><div style="left:52.500px;top:267.4px;width:2.500px;height:1px;background:#727272"></div><div style="left:52.500px;top:274.7px;width:2.500px;height:1px;background:#727272"></div><div style="left:40px;top:282.0px;width:15px;height:1px;background:#868686"></div><span class="t" style="left:41px;top:284.4px;font-size:10px;color:#b0b0b0">2</span><div style="left:52.500px;top:289.4px;width:2.500px;height:1px;background:#727272"></div><div style="left:52.500px;top:296.7px;width:2.500px;height:1px;background:#727272"></div><div style="left:52.500px;top:304.0px;width:2.500px;height:1px;background:#727272"></div><div style="left:52.500px;top:311.3px;width:2.500px;height:1px;background:#727272"></div><div style="left:40px;top:318.6px;width:15px;height:1px;background:#868686"></div><span class="t" style="left:41px;top:321.0px;font-size:10px;color:#b0b0b0">3</span><div style="left:52.500px;top:325.9px;width:2.500px;height:1px;background:#727272"></div><div style="left:52.500px;top:333.2px;width:2.500px;height:1px;background:#727272"></div><div style="left:52.500px;top:340.6px;width:2.500px;height:1px;background:#727272"></div><div style="left:52.500px;top:347.9px;width:2.500px;height:1px;background:#727272"></div><div style="left:40px;top:355.2px;width:15px;height:1px;background:#868686"></div><span class="t" style="left:41px;top:357.6px;font-size:10px;color:#b0b0b0">4</span><div style="left:52.500px;top:362.5px;width:2.500px;height:1px;background:#727272"></div><div style="left:52.500px;top:369.8px;width:2.500px;height:1px;background:#727272"></div><div style="left:52.500px;top:377.1px;width:2.500px;height:1px;background:#727272"></div><div style="left:52.500px;top:384.4px;width:2.500px;height:1px;background:#727272"></div><div style="left:40px;top:391.8px;width:15px;height:1px;background:#868686"></div><span class="t" style="left:41px;top:394.1px;font-size:10px;color:#b0b0b0">5</span><div style="left:52.500px;top:399.1px;width:2.500px;height:1px;background:#727272"></div><div style="left:52.500px;top:406.4px;width:2.500px;height:1px;background:#727272"></div><div style="left:52.500px;top:413.7px;width:2.500px;height:1px;background:#727272"></div><div style="left:52.500px;top:421.0px;width:2.500px;height:1px;background:#727272"></div><div style="left:40px;top:428.3px;width:15px;height:1px;background:#868686"></div><span class="t" style="left:41px;top:430.7px;font-size:10px;color:#b0b0b0">6</span><div style="left:52.500px;top:435.6px;width:2.500px;height:1px;background:#727272"></div><div style="left:52.500px;top:442.9px;width:2.500px;height:1px;background:#727272"></div><div style="left:52.500px;top:450.3px;width:2.500px;height:1px;background:#727272"></div><div style="left:52.500px;top:457.6px;width:2.500px;height:1px;background:#727272"></div><div style="left:40px;top:464.9px;width:15px;height:1px;background:#868686"></div><span class="t" style="left:41px;top:467.3px;font-size:10px;color:#b0b0b0">7</span><div style="left:52.500px;top:472.2px;width:2.500px;height:1px;background:#727272"></div><div style="left:52.500px;top:479.5px;width:2.500px;height:1px;background:#727272"></div><div style="left:52.500px;top:486.8px;width:2.500px;height:1px;background:#727272"></div><div style="left:52.500px;top:494.1px;width:2.500px;height:1px;background:#727272"></div><div style="left:40px;top:501.5px;width:15px;height:1px;background:#868686"></div><span class="t" style="left:41px;top:503.9px;font-size:10px;color:#b0b0b0">8</span><div style="left:52.500px;top:508.8px;width:2.500px;height:1px;background:#727272"></div><div style="left:52.500px;top:516.1px;width:2.500px;height:1px;background:#727272"></div><div style="left:52.500px;top:523.4px;width:2.500px;height:1px;background:#727272"></div><div style="left:52.500px;top:530.7px;width:2.500px;height:1px;background:#727272"></div><div style="left:40px;top:538.0px;width:15px;height:1px;background:#868686"></div><span class="t" style="left:41px;top:540.4px;font-size:10px;color:#b0b0b0">9</span><div style="left:52.500px;top:545.3px;width:2.500px;height:1px;background:#727272"></div><div style="left:52.500px;top:552.7px;width:2.500px;height:1px;background:#727272"></div><div style="left:52.500px;top:560.0px;width:2.500px;height:1px;background:#727272"></div><div style="left:52.500px;top:567.3px;width:2.500px;height:1px;background:#727272"></div><div style="left:40px;top:574.6px;width:15px;height:1px;background:#868686"></div><span class="t" style="left:41px;top:577.0px;font-size:10px;color:#b0b0b0">1</span><span class="t" style="left:41px;top:586.0px;font-size:10px;color:#b0b0b0">0</span><div style="left:52.500px;top:581.9px;width:2.500px;height:1px;background:#727272"></div><div style="left:52.500px;top:589.2px;width:2.500px;height:1px;background:#727272"></div><div style="left:52.500px;top:596.5px;width:2.500px;height:1px;background:#727272"></div><div style="left:52.500px;top:603.9px;width:2.500px;height:1px;background:#727272"></div><div style="left:40px;top:611.2px;width:15px;height:1px;background:#868686"></div><span class="t" style="left:41px;top:613.6px;font-size:10px;color:#b0b0b0">1</span><span class="t" style="left:41px;top:622.6px;font-size:10px;color:#b0b0b0">1</span><div style="left:52.500px;top:618.5px;width:2.500px;height:1px;background:#727272"></div><div style="left:52.500px;top:625.8px;width:2.500px;height:1px;background:#727272"></div><div style="left:52.500px;top:633.1px;width:2.500px;height:1px;background:#727272"></div><div style="left:52.500px;top:640.4px;width:2.500px;height:1px;background:#727272"></div><div style="left:40px;top:647.7px;width:15px;height:1px;background:#868686"></div><span class="t" style="left:41px;top:650.1px;font-size:10px;color:#b0b0b0">1</span><span class="t" style="left:41px;top:659.1px;font-size:10px;color:#b0b0b0">2</span><div style="left:52.500px;top:655.1px;width:2.500px;height:1px;background:#727272"></div><div style="left:52.500px;top:662.4px;width:2.500px;height:1px;background:#727272"></div><div style="left:52.500px;top:669.7px;width:2.500px;height:1px;background:#727272"></div><div style="left:52.500px;top:677.0px;width:2.500px;height:1px;background:#727272"></div><div style="left:40px;top:684.3px;width:15px;height:1px;background:#868686"></div><span class="t" style="left:41px;top:686.7px;font-size:10px;color:#b0b0b0">1</span><div style="left:52.500px;top:691.6px;width:2.500px;height:1px;background:#727272"></div>
<div style="left:40px;top:108px;width:12px;height:3px;overflow:hidden"><span class="t" style="left:1px;top:-6.800px;font-size:10px;color:#b0b0b0">3</span></div>
<div style="left:282px;top:92px;width:1px;height:9px;background:#fff"></div>
<div style="left:41px;top:262px;width:9px;height:1px;background:#fff"></div>
<div style="left:52px;top:92px;width:0;height:16px;border-left:1px dotted #777"></div><div style="left:40px;top:104px;width:16px;height:0;border-top:1px dotted #777"></div>
<div style="left:56px;top:108px;width:915px;height:589px;background:#333"></div>
<div style="left:320px;top:208px;width:387px;height:387px;background:#fff"></div>
<svg style="left:320px;top:208px" width="387" height="387" viewBox="0 0 387 387"><path d="M0 0H193.5V54.4A38.6 38.6 0 0 1 193.5 131.6V193H136.9A38.61 38.61 0 1 0 59.7 193H0Z" fill="#000"/></svg>
<div style="left:512px;top:108px;width:1px;height:586px;background:rgba(128,222,226,0.400)"></div><div style="left:513px;top:108px;width:1px;height:586px;background:#80dee2"></div>
<div style="left:56px;top:401px;width:915px;height:1px;background:#80dee2"></div><div style="left:56px;top:402px;width:915px;height:1px;background:rgba(128,222,226,0.250)"></div>
<div style="left:971px;top:91px;width:17px;height:606px;background:#2b2b2b"></div>
<div style="left:40px;top:697px;width:948px;height:15px;background:#262626"></div>
<div style="left:87px;top:697px;width:182px;height:15px;background:#2d2d2d"></div>
<div style="left:971px;top:697px;width:17px;height:15px;background:#353535"></div>
<div style="left:0px;top:712px;width:1268px;height:2px;background:#1e1e1e"></div>
<div style="left:48px;top:712px;width:340px;height:2px;background:#9a9a9a"></div>
<span class="t" style="left:46.4px;top:700.5px;font-size:8.5px;color:#e6e6e6;">194.87%</span>
<span class="t" style="left:106px;top:700px;font-size:9.5px;color:#a8a8a8;"><i style="font-size:9px">10.58&nbsp;</i><b>厘</b><b>米</b><i style="font-size:9px">&nbsp;x&nbsp;10.58&nbsp;</i><b>厘</b><b>米</b><i style="font-size:9px">&nbsp;(72&nbsp;ppi)</i></span>
<svg style="left:259px;top:700px" width="6" height="10" viewBox="0 0 6 10"><path d="M1 1L4.6 5L1 9" fill="none" stroke="#aaa" stroke-width="1"/></svg>
<div style="left:274px;top:261px;width:13px;height:1px;background:#a8a8a8"></div><div style="left:280px;top:255px;width:1px;height:13px;background:#a8a8a8"></div>
<div style="left:320px;top:208px;width:194px;height:1px;background:#9a9a9a"></div><div style="left:320px;top:208px;width:1px;height:193px;background:#9a9a9a"></div>
<div style="left:988px;top:62px;width:2px;height:652px;background:#222"></div>
<div style="left:990px;top:62px;width:278px;height:12px;background:#262626"></div>
<div style="left:990px;top:74px;width:38px;height:640px;background:#323232"></div>
<div style="left:1028px;top:74px;width:2px;height:640px;background:#222"></div>
<div style="left:1030px;top:74px;width:238px;height:640px;background:#323232"></div>
<svg style="left:1014px;top:64px" width="9" height="8" viewBox="0 0 9 8"><path d="M3.600 1.200L1 3.800L3.600 6.400M7.600 1.200L5 3.800L7.600 6.400" fill="none" stroke="#bbb" stroke-width="1.100"/></svg>
<svg style="left:1254px;top:64px" width="9" height="8" viewBox="0 0 9 8"><path d="M1 1.200L3.600 3.800L1 6.400M5 1.200L7.600 3.800L5 6.400" fill="none" stroke="#bbb" stroke-width="1.100"/></svg>
<div style="left:990px;top:73px;width:278px;height:1px;background:#1f1f1f"></div>
<div style="left:999px;top:78px;width:18px;height:4px;background:repeating-linear-gradient(90deg,#262626 0 1px,#323232 1px 2px)"></div>
<div style="left:999px;top:119px;width:18px;height:4px;background:repeating-linear-gradient(90deg,#262626 0 1px,#323232 1px 2px)"></div>
<div style="left:999px;top:214px;width:18px;height:4px;background:repeating-linear-gradient(90deg,#262626 0 1px,#323232 1px 2px)"></div>
<div style="left:990px;top:114px;width:38px;height:1px;background:#262626"></div>
<div style="left:990px;top:209px;width:38px;height:1px;background:#262626"></div>
<div style="left:990px;top:279px;width:38px;height:1px;background:#262626"></div>
<svg style="left:1000px;top:88px" width="20" height="19" viewBox="0 0 20 19"><rect x="2.600" y="1.600" width="4" height="3.600" fill="none" stroke="#d6d6d6" stroke-width="1.100"/><rect x="2.600" y="7.200" width="4" height="3.600" fill="none" stroke="#d6d6d6" stroke-width="1.100"/><rect x="2.100" y="12.600" width="5" height="4.600" fill="#d6d6d6"/><path d="M10.500 15.800C14.400 15 16.400 11.800 15.600 8.200C15.200 6.400 14.200 5.200 13 4.600" fill="none" stroke="#d6d6d6" stroke-width="2.100"/><path d="M9 6.600L14.200 1.600L15 8.200Z" fill="#d6d6d6"/></svg>
<svg style="left:1000px;top:128px" width="20" height="19" viewBox="0 0 20 19"><path d="M6 1.600L10 3.600V8.200L6 10.400L2 8.200V3.600Z" fill="none" stroke="#d6d6d6" stroke-width="1.100"/><path d="M2 3.600L6 5.800L10 3.600M6 5.800V10.400" fill="none" stroke="#d6d6d6" stroke-width="1"/><rect x="12.600" y="2" width="4.400" height="3.400" fill="#d6d6d6"/><rect x="12.600" y="6.800" width="4.400" height="3.400" fill="#d6d6d6"/><rect x="2" y="13" width="15.400" height="3.600" fill="#d6d6d6"/><path d="M14 14L16 14L15 15.600Z" fill="#323232"/></svg>
<svg style="left:1000px;top:156px" width="22" height="20" viewBox="0 0 22 20"><path d="M19.200 2L20.600 3.200L12.600 12L10.600 10.200Z" fill="#d6d6d6"/><path d="M10 11L12 12.800C11.800 15.600 9.600 16.800 6 16.400C8 15.200 7.600 12 10 11Z" fill="#d6d6d6"/><path d="M1 3H3M4.200 3H8M1 6.200H3M4.200 6.200H8M1 9.400H3M4.200 9.400H7" stroke="#d6d6d6" stroke-width="1.400"/></svg>
<svg style="left:1000px;top:183px" width="22" height="20" viewBox="0 0 22 20"><path d="M1 5.400C2.600 2.600 6 2.600 8 5.400C6 8 2.600 8 1 5.400Z" fill="#d6d6d6"/><path d="M8 5.400H20" stroke="#d6d6d6" stroke-width="1.800"/><path d="M12.400 13L18.600 8.600C20.600 11 20.600 15.600 18.600 18Z" fill="#d6d6d6"/><path d="M2.600 13H13" stroke="#d6d6d6" stroke-width="1.800"/></svg>
<span class="t" style="left:1002px;top:225px;font-size:17px;color:#d6d6d6">A</span><div style="left:1016px;top:226px;width:1px;height:16px;background:#d6d6d6"></div>
<svg style="left:1003px;top:254px" width="14" height="17" viewBox="0 0 14 17"><path d="M6.400 1H12.400V2.600H11V16H9.400V2.600H8V16H6.400V9.400A4.200 4.200 0 0 1 6.400 1Z" fill="#d6d6d6"/></svg>
<div style="left:1067px;top:74px;width:201px;height:27px;background:#282828"></div>
<span class="t" style="left:1038px;top:82.5px;font-size:10px;color:#e6e6e6;"><b>颜</b><b>色</b></span>
<span class="t" style="left:1077px;top:82.5px;font-size:10px;color:#9a9a9a;"><b>色</b><b>板</b></span>
<svg style="left:1251px;top:83px" width="11" height="9" viewBox="0 0 11 9"><path d="M0 1H11M0 3.300H11M0 5.600H11M0 7.900H11" stroke="#8a8a8a" stroke-width="1.200"/></svg>
<div style="left:1048px;top:121px;width:17px;height:18px;background:#fff"></div>
<div style="left:1037px;top:111px;width:20px;height:20px;background:#1a1a1a"></div><div style="left:1038px;top:112px;width:18px;height:18px;background:#000;border:1.500px solid #fff"></div>
<div style="left:1072px;top:108px;width:143px;height:247px;background:linear-gradient(to bottom,rgba(0,0,0,0),#000),linear-gradient(to right,#fff,#f00)"></div>
<div style="left:1234px;top:108px;width:18px;height:247px;background:linear-gradient(to bottom,#f00 0%,#f0f 16.670%,#00f 33.330%,#0ff 50%,#0f0 66.670%,#ff0 83.330%,#f00 100%)"></div>
<svg style="left:1072px;top:348px" width="8" height="7" viewBox="0 0 8 7"><path d="M0 1.600A3.600 3.600 0 0 1 6.400 7" fill="none" stroke="#fff" stroke-width="1"/></svg>
<svg style="left:1224px;top:350px" width="9" height="10" viewBox="0 0 9 10"><path d="M1.500 1.600L7.400 5L1.500 8.400Z" fill="#e4e4e4" stroke="#e4e4e4" stroke-width="1" stroke-linejoin="round"/></svg>
<div style="left:1030px;top:387px;width:238px;height:2px;background:#222"></div>
<div style="left:1030px;top:388px;width:238px;height:302px;background:#2e2e2e"></div>
<div style="left:1067px;top:389px;width:201px;height:28px;background:#282828"></div>
<div style="left:1030px;top:389px;width:37px;height:28px;background:#323232"></div>
<span class="t" style="left:1038px;top:398px;font-size:10px;color:#e6e6e6;"><b>图</b><b>层</b></span>
<span class="t" style="left:1077px;top:398px;font-size:10px;color:#9a9a9a;"><b>通</b><b>道</b></span>
<span class="t" style="left:1115px;top:398px;font-size:10px;color:#9a9a9a;"><b>路</b><b>径</b></span>
<svg style="left:1251px;top:399px" width="11" height="9" viewBox="0 0 11 9"><path d="M0 1H11M0 3.300H11M0 5.600H11M0 7.900H11" stroke="#8a8a8a" stroke-width="1.200"/></svg>
<div style="left:1030px;top:417px;width:238px;height:89px;background:#323232"></div>
<div class="inp" style="left:1034px;top:427px;width:68px;height:19px;border-radius:2px"></div>
<svg style="left:1040px;top:431px" width="12" height="12" viewBox="0 0 12 12"><circle cx="4.800" cy="4.800" r="3.400" fill="none" stroke="#ddd" stroke-width="1.400"/><path d="M7.200 7.400L10.600 10.800" stroke="#ddd" stroke-width="1.600"/></svg>
<span class="t" style="left:1053px;top:431.5px;font-size:10px;color:#e0e0e0;"><b>类</b><b>型</b></span>
<svg style="left:1092px;top:435px" width="8" height="6" viewBox="0 0 8 6"><path d="M0.800 1.200L4 4.300L7.200 1.200" fill="none" stroke="#b0b0b0" stroke-width="1.100"/></svg>
<svg style="left:1116px;top:430px" width="12" height="10" viewBox="0 0 12 10"><rect x="0.700" y="0.700" width="10.600" height="8.600" fill="none" stroke="#ddd" stroke-width="1.300"/><path d="M2 8L4.600 4.600L6.400 6.600L7.800 5.400L10 8Z" fill="#ddd"/></svg>
<svg style="left:1140px;top:429px" width="12" height="12" viewBox="0 0 12 12"><circle cx="6" cy="6" r="4.700" fill="none" stroke="#ddd" stroke-width="1.300"/><path d="M2.700 9.300A4.700 4.700 0 0 1 9.300 2.700Z" fill="#ddd"/></svg>
<span class="t" style="left:1164px;top:429px;font-family:'Liberation Serif',serif;font-weight:bold;font-size:14px;color:#ddd">T</span>
<svg style="left:1188px;top:429px" width="13" height="12" viewBox="0 0 13 12"><rect x="2.200" y="2.200" width="8.600" height="7.600" fill="none" stroke="#ddd" stroke-width="1.100"/><rect x="0.600" y="0.600" width="3" height="3" fill="#ddd"/><rect x="9.400" y="0.600" width="3" height="3" fill="#ddd"/><rect x="0.600" y="8.400" width="3" height="3" fill="#ddd"/><rect x="9.400" y="8.400" width="3" height="3" fill="#ddd"/></svg>
<svg style="left:1212px;top:428px" width="12" height="13" viewBox="0 0 12 13"><path d="M3 1H8L10.600 3.600V11.600H3Z" fill="#ddd"/><rect x="0.800" y="6" width="5.400" height="5.600" fill="#323232" stroke="#ddd" stroke-width="1"/></svg>
<div style="left:1238px;top:426px;width:9px;height:18px;border-radius:5px;background:#222"></div><div style="left:1238px;top:426px;width:9px;height:9px;border-radius:5px;background:#d8d8d8"></div>
<div style="left:1030px;top:447px;width:238px;height:1px;background:#2a2a2a"></div><div style="left:1030px;top:475px;width:238px;height:1px;background:#2a2a2a"></div>
<div class="inp" style="left:1034px;top:455px;width:113px;height:18px;border-radius:2px"></div>
<span class="t" style="left:1041px;top:459px;font-size:10px;color:#e0e0e0;"><b>正</b><b>常</b></span>
<svg style="left:1136px;top:462px" width="8" height="6" viewBox="0 0 8 6"><path d="M0.800 1.200L4 4.300L7.200 1.200" fill="none" stroke="#b0b0b0" stroke-width="1.100"/></svg>
<span class="t" style="left:1154px;top:458px;font-size:9.6px;color:#b8b8b8;"><b>不</b><b>透</b><b>明</b><b>度</b>:</span>
<div class="inp" style="left:1200px;top:455px;width:30px;height:16px"></div>
<span class="t" style="left:1203px;top:458.5px;font-size:8.6px;color:#e0e0e0;">100%</span>
<div style="left:1231px;top:455px;width:15px;height:16px;background:#2a2a2a;border:1px solid #3c3c3c"></div>
<svg style="left:1234px;top:461px" width="8" height="6" viewBox="0 0 8 6"><path d="M0.800 1.200L4 4.300L7.200 1.200" fill="none" stroke="#b0b0b0" stroke-width="1.100"/></svg>
<span class="t" style="left:1035px;top:485px;font-size:9.6px;color:#b8b8b8;"><b>锁</b><b>定</b>:</span>
<svg style="left:1066px;top:484px" width="12" height="12" viewBox="0 0 12 12"><rect x="0.600" y="0.600" width="10.800" height="10.800" rx="1" fill="#ddd"/><path d="M2 2H4.600V4.600H2ZM7.400 2H10V4.600H7.400ZM4.600 4.600H7.400V7.400H4.600ZM2 7.400H4.600V10H2ZM7.400 7.400H10V10H7.400Z" fill="#323232"/></svg>
<svg style="left:1088px;top:483px" width="13" height="14" viewBox="0 0 13 14"><path d="M10.800 1L12 2L6.600 9.200L4.800 7.800Z" fill="#ddd"/><path d="M4.200 8.400L6 9.800C6 12 4 13 1.200 12.600C2.800 11.600 2.400 9 4.200 8.400Z" fill="#ddd"/></svg>
<svg style="left:1109px;top:483px" width="13" height="13" viewBox="0 0 13 13"><path d="M6.500 0.500l2.200 2.700h-1.500v2.600h2.600V4.300l2.700 2.200-2.700 2.200V7.200H7.200v2.600h1.500L6.500 12.500 4.300 9.800h1.500V7.200H3.200v1.500L0.500 6.500 3.200 4.300v1.500h2.600V3.200H4.300z" fill="#ddd"/></svg>
<svg style="left:1130px;top:483px" width="14" height="13" viewBox="0 0 14 13"><path d="M3 0.500V10H13M0.500 3H10.500V12.500" fill="none" stroke="#ddd" stroke-width="1.200"/><path d="M10.500 3L12.500 1" stroke="#ddd" stroke-width="1"/></svg>
<svg style="left:1154px;top:483px" width="11" height="13" viewBox="0 0 11 13"><rect x="1" y="5.600" width="9" height="6.800" rx="0.800" fill="#ddd"/><path d="M3 5.600V3.600A2.500 2.500 0 0 1 8 3.600V5.600" fill="none" stroke="#ddd" stroke-width="1.400"/></svg>
<span class="t" style="left:1173px;top:485px;font-size:9.6px;color:#b8b8b8;"><b>填</b><b>充</b>:</span>
<div class="inp" style="left:1200px;top:482px;width:30px;height:16px"></div>
<span class="t" style="left:1203px;top:485.5px;font-size:8.6px;color:#e0e0e0;">100%</span>
<div style="left:1231px;top:482px;width:15px;height:16px;background:#2a2a2a;border:1px solid #3c3c3c"></div>
<svg style="left:1234px;top:488px" width="8" height="6" viewBox="0 0 8 6"><path d="M0.800 1.200L4 4.300L7.200 1.200" fill="none" stroke="#b0b0b0" stroke-width="1.100"/></svg>
<div style="left:1030px;top:506px;width:221px;height:39px;background:#323232"></div><div style="left:1060px;top:506px;width:191px;height:39px;background:#4b4b4b"></div>
<div style="left:1030px;top:546px;width:221px;height:40px;background:#323232"></div>
<div style="left:1030px;top:545px;width:221px;height:1px;background:#262626"></div>
<div style="left:1251px;top:506px;width:17px;height:184px;background:#2b2b2b"></div>
<div style="left:1059px;top:506px;width:1px;height:80px;background:#2a2a2a"></div>
<svg style="left:1038px;top:521px" width="15" height="10" viewBox="0 0 15 10"><path d="M0.600 5C3.600 -0.400 11.400 -0.400 14.400 5C11.400 10.400 3.600 10.400 0.600 5Z" fill="#e0e0e0"/><circle cx="7.500" cy="5" r="2.600" fill="#2a2a2a"/><circle cx="7.500" cy="5" r="1.200" fill="#e0e0e0"/></svg>
<svg style="left:1038px;top:561px" width="15" height="10" viewBox="0 0 15 10"><path d="M0.600 5C3.600 -0.400 11.400 -0.400 14.400 5C11.400 10.400 3.600 10.400 0.600 5Z" fill="#e0e0e0"/><circle cx="7.500" cy="5" r="2.600" fill="#2a2a2a"/><circle cx="7.500" cy="5" r="1.200" fill="#e0e0e0"/></svg>
<div style="left:1065px;top:511px;width:30px;height:30px;background:#fff;background-image:linear-gradient(45deg,#ccc 25%,transparent 25%,transparent 75%,#ccc 75%),linear-gradient(45deg,#ccc 25%,transparent 25%,transparent 75%,#ccc 75%);background-size:3.750px 3.750px;background-position:0 0,1.875px 1.875px"></div>
<svg style="left:1065px;top:511px" width="30" height="30" viewBox="0 0 33 33"><path d="M0 0H16.500V4.600A3.300 3.300 0 0 1 16.500 11.200V16.500H11.700A3.300 3.300 0 0 0 5.100 16.500H0Z" fill="#000"/></svg>
<svg style="left:1061px;top:508px" width="36" height="36" viewBox="0 0 36 36"><path d="M0.500 12V0.500H12M24 0.500H35.500V12M35.500 24V35.500H24M12 35.500H0.500V24" fill="none" stroke="#fff" stroke-width="1"/></svg>
<span class="t" style="left:1104px;top:521px;font-size:9.6px;color:#e6e6e6;"><b>图</b><b>层</b>&nbsp;1</span>
<div style="left:1064px;top:551px;width:31px;height:31px;background:#fff;border:1px solid #ccc"></div>
<span class="t" style="left:1104px;top:561px;font-size:9.6px;color:#e6e6e6;"><b>背</b><b>景</b></span>
<svg style="left:1225px;top:559px" width="11" height="13" viewBox="0 0 11 13"><rect x="1.200" y="5.800" width="8.600" height="6.400" rx="0.600" fill="none" stroke="#ddd" stroke-width="1.200"/><path d="M3.200 5.800V3.800A2.300 2.300 0 0 1 7.800 3.800V5.800" fill="none" stroke="#ddd" stroke-width="1.200"/><rect x="4.800" y="8" width="1.400" height="2" fill="#ddd"/></svg>
<div style="left:1030px;top:690px;width:238px;height:24px;background:#323232"></div><div style="left:1030px;top:689px;width:238px;height:1px;background:#262626"></div>
<svg style="left:1084px;top:696px" width="15" height="10" viewBox="0 0 15 10"><path d="M6 2.200H3.800A2.800 2.800 0 0 0 3.800 7.800H6M9 2.200H11.200A2.800 2.800 0 0 1 11.200 7.800H9M4.600 5H10.400" fill="none" stroke="#8c8c8c" stroke-width="1.300"/></svg>
<span class="t" style="left:1110px;top:694px;font-size:13px;font-style:italic;color:#c4c4c4"><i style="font-style:italic">fx</i></span><div style="left:1121px;top:706px;width:2px;height:2px;background:#c4c4c4"></div>
<svg style="left:1133px;top:695px" width="14" height="12" viewBox="0 0 14 12"><rect x="0.500" y="0.500" width="13" height="11" rx="1" fill="#c4c4c4"/><circle cx="7" cy="6" r="3" fill="#323232"/></svg>
<svg style="left:1157px;top:694px" width="15" height="14" viewBox="0 0 15 14"><circle cx="6.500" cy="6.500" r="5.200" fill="none" stroke="#c4c4c4" stroke-width="1.300"/><path d="M2.800 10.200A5.200 5.200 0 0 1 10.200 2.800Z" fill="#c4c4c4"/><rect x="12" y="11.500" width="2" height="2" fill="#c4c4c4"/></svg>
<svg style="left:1181px;top:695px" width="14" height="12" viewBox="0 0 14 12"><path d="M0.500 1.500H5L6.400 3H13.500V11.500H0.500Z" fill="#c4c4c4"/></svg>
<svg style="left:1205px;top:695px" width="13" height="12" viewBox="0 0 13 12"><path d="M1 0.800H12V11.200H5L1 7.400Z" fill="none" stroke="#c4c4c4" stroke-width="1.400"/><path d="M1 7.400H5V11.200" fill="#c4c4c4" stroke="#c4c4c4" stroke-width="1"/></svg>
<svg style="left:1229px;top:694px" width="13" height="14" viewBox="0 0 13 14"><path d="M1 3H12M4.600 3V1.200H8.400V3M2.400 3.400V13H10.600V3.400M5 5.400V11M6.500 5.400V11M8 5.400V11" fill="none" stroke="#c4c4c4" stroke-width="1.200"/></svg>
</body></html>
